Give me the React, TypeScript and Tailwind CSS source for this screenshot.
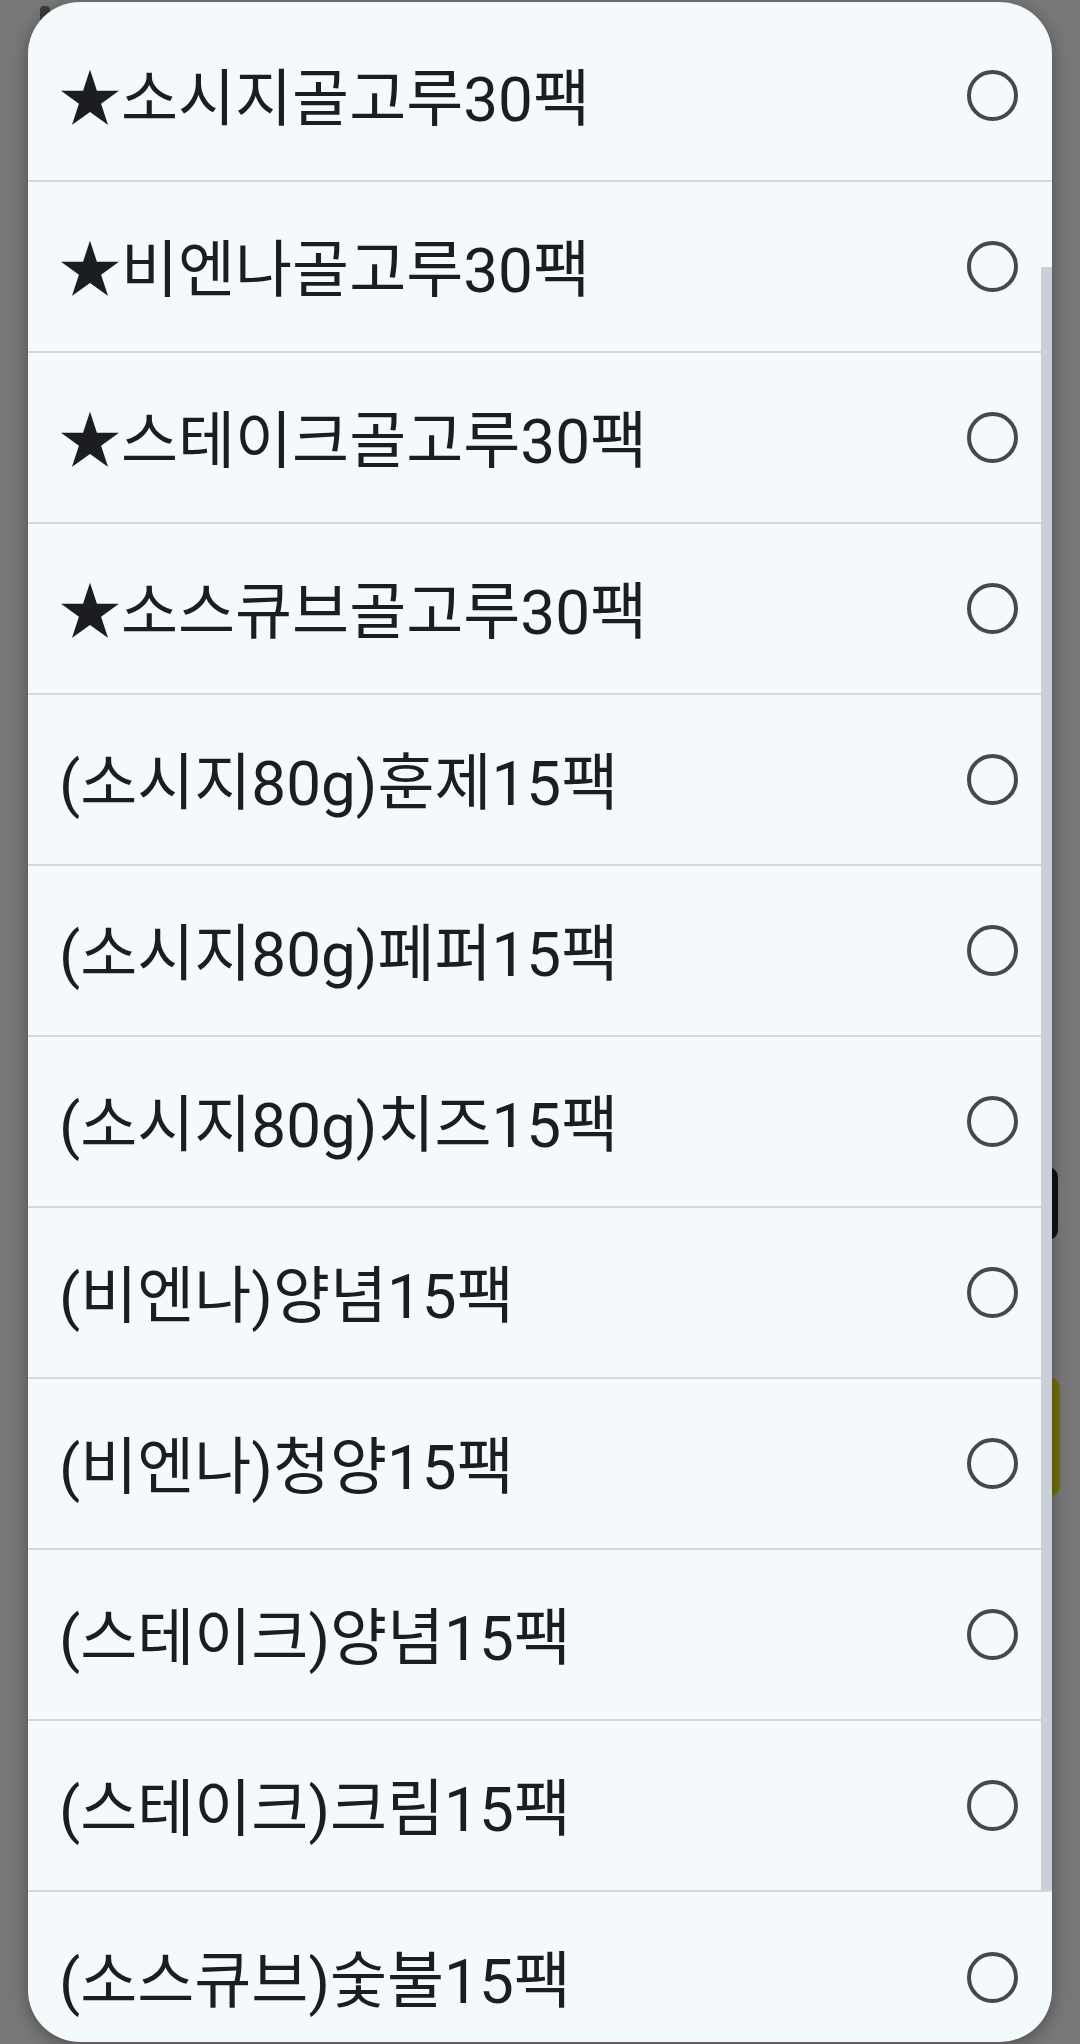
const items = [
  "★소시지골고루30팩",
  "★비엔나골고루30팩",
  "★스테이크골고루30팩",
  "★소스큐브골고루30팩",
  "(소시지80g)훈제15팩",
  "(소시지80g)페퍼15팩",
  "(소시지80g)치즈15팩",
  "(비엔나)양념15팩",
  "(비엔나)청양15팩",
  "(스테이크)양념15팩",
  "(스테이크)크림15팩",
  "(소스큐브)숯불15팩",
];

function Row({ label, last }: { label: string; last: boolean }) {
  return (
    <div
      className={`flex h-[171px] shrink-0 items-center justify-between pl-[31px] pr-[34px] ${
        last ? "" : "border-b-2 border-[#d3d8dc]"
      }`}
    >
      <span className="mt-[8px] block text-[62px] leading-none text-[#1b1d20] whitespace-nowrap">{label}</span>
      {/* radio, unchecked */}
      <span className="block h-[51px] w-[51px] shrink-0 rounded-full border-[4px] border-[#45494e]" />
    </div>
  );
}

export default function App() {
  return (
    <div
      className="relative h-[2044px] w-full overflow-hidden bg-[#787878]"
      style={{ fontFamily: 'Roboto, "Noto Sans CJK KR", sans-serif' }}
    >
      {/* bits of the screen behind the dim layer */}
      <div className="absolute left-[40px] top-[6px] h-[16px] w-[10px] rounded-sm bg-[#3c3c3c]" />
      <div className="absolute left-[1030px] top-[1167px] h-[73px] w-[28px] rounded-r-[10px] bg-[#121212]" />
      <div className="absolute left-[1030px] top-[1377px] h-[120px] w-[30px] rounded-r-[12px] bg-[#746d0c]" />

      <div className="relative z-10 mx-[28px] mt-[2px] flex h-[2040px] w-[1024px] flex-col overflow-hidden rounded-[52px] bg-[#f4f9fc] pt-[9px] shadow-[0_4px_18px_rgba(0,0,0,0.35)]">
        {items.map((label, i) => (
          <Row key={label} label={label} last={i === items.length - 1} />
        ))}
        {/* scrollbar thumb */}
        <div className="absolute right-0 top-[265px] h-[1623px] w-[11px] bg-[#c8cfd6]" />
      </div>
    </div>
  );
}
